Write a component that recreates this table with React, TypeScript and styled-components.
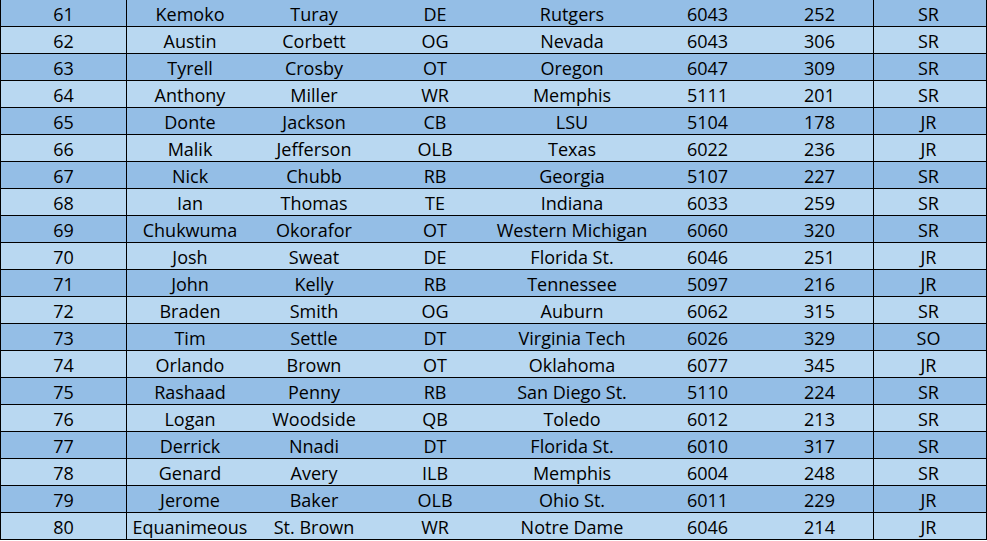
import styled, { createGlobalStyle } from "styled-components";

const GlobalStyle = createGlobalStyle`
    html, body {
        margin: 0;
        padding: 0;
        background: #ffffff;
    }
`;

type Player = [number, string, string, string, string, number, number, string];

const players: Player[] = [
    [61, 'Kemoko', 'Turay', 'DE', 'Rutgers', 6043, 252, 'SR'],
    [62, 'Austin', 'Corbett', 'OG', 'Nevada', 6043, 306, 'SR'],
    [63, 'Tyrell', 'Crosby', 'OT', 'Oregon', 6047, 309, 'SR'],
    [64, 'Anthony', 'Miller', 'WR', 'Memphis', 5111, 201, 'SR'],
    [65, 'Donte', 'Jackson', 'CB', 'LSU', 5104, 178, 'JR'],
    [66, 'Malik', 'Jefferson', 'OLB', 'Texas', 6022, 236, 'JR'],
    [67, 'Nick', 'Chubb', 'RB', 'Georgia', 5107, 227, 'SR'],
    [68, 'Ian', 'Thomas', 'TE', 'Indiana', 6033, 259, 'SR'],
    [69, 'Chukwuma', 'Okorafor', 'OT', 'Western Michigan', 6060, 320, 'SR'],
    [70, 'Josh', 'Sweat', 'DE', 'Florida St.', 6046, 251, 'JR'],
    [71, 'John', 'Kelly', 'RB', 'Tennessee', 5097, 216, 'JR'],
    [72, 'Braden', 'Smith', 'OG', 'Auburn', 6062, 315, 'SR'],
    [73, 'Tim', 'Settle', 'DT', 'Virginia Tech', 6026, 329, 'SO'],
    [74, 'Orlando', 'Brown', 'OT', 'Oklahoma', 6077, 345, 'JR'],
    [75, 'Rashaad', 'Penny', 'RB', 'San Diego St.', 5110, 224, 'SR'],
    [76, 'Logan', 'Woodside', 'QB', 'Toledo', 6012, 213, 'SR'],
    [77, 'Derrick', 'Nnadi', 'DT', 'Florida St.', 6010, 317, 'SR'],
    [78, 'Genard', 'Avery', 'ILB', 'Memphis', 6004, 248, 'SR'],
    [79, 'Jerome', 'Baker', 'OLB', 'Ohio St.', 6011, 229, 'JR'],
    [80, 'Equanimeous', 'St. Brown', 'WR', 'Notre Dame', 6046, 214, 'JR'],
];

const Sheet = styled.div`
    width: 985px;
    border-left: 1px solid #000;
    border-right: 1px solid #000;
    font-family: "Open Sans", "Liberation Sans", sans-serif;
    font-size: 18px;
    font-weight: 500;
    color: #000;
`;

const Row = styled.div<{ $dark: boolean }>`
    display: grid;
    grid-template-columns: 126px 126px 122px 120px 154px 117px 108px 109px;
    height: 26px;
    border-bottom: 1px solid #000;
    background: ${p => p.$dark ? '#94bee6' : '#b9d8f1'};
`;

const Cell = styled.div<{ $divider?: boolean }>`
    display: flex;
    align-items: center;
    justify-content: center;
    padding-top: 1px;
    white-space: nowrap;
    line-height: 1;
    border-right: ${p => p.$divider ? '1px solid #000' : 'none'};
`;

const App = () => {
    return (
        <>
            <GlobalStyle />
            <Sheet>
                {players.map((p, i) => (
                    <Row key={p[0]} $dark={i % 2 === 0}>
                        <Cell $divider>{p[0]}</Cell>
                        <Cell>{p[1]}</Cell>
                        <Cell>{p[2]}</Cell>
                        <Cell>{p[3]}</Cell>
                        <Cell>{p[4]}</Cell>
                        <Cell>{p[5]}</Cell>
                        <Cell $divider>{p[6]}</Cell>
                        <Cell>{p[7]}</Cell>
                    </Row>
                ))}
            </Sheet>
        </>
    );
}

export default App;
